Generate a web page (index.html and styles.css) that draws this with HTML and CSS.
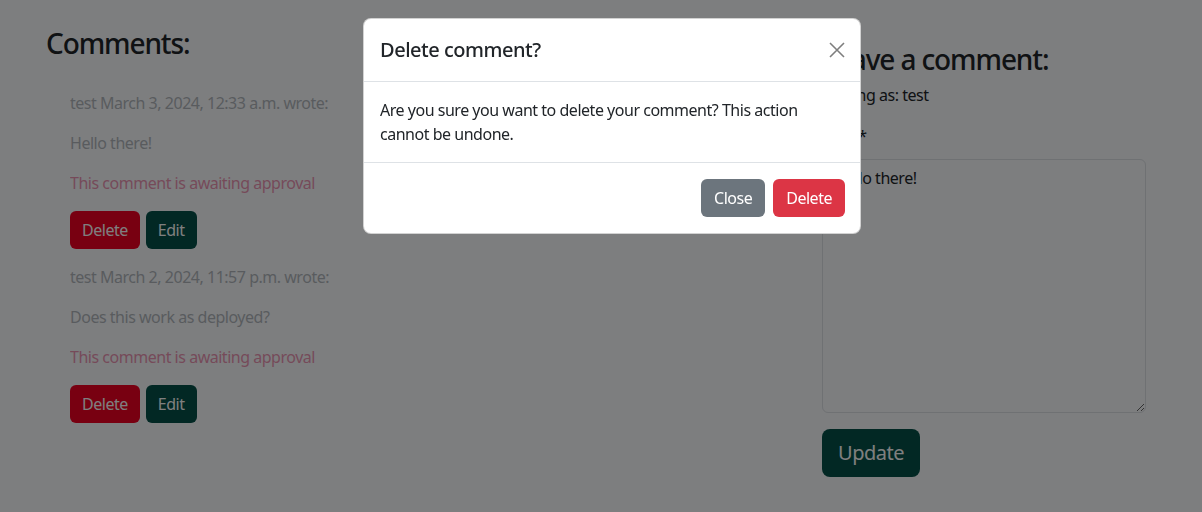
FILE: index.html
```html
<!DOCTYPE html>
<html lang="en">
<head>
<meta charset="utf-8">
<title>Comments</title>
<link rel="stylesheet" href="styles.css">
</head>
<body>
<main class="page">
  <section class="comments-col">
    <h3 class="heading">Comments:</h3>
    <div class="comment faded">
      <p class="meta">test March 3, 2024, 12:33 a.m. wrote:</p>
      <p class="body-text">Hello there!</p>
      <p class="approval">This comment is awaiting approval</p>
    </div>
    <div class="actions">
      <button class="btn btn-red">Delete</button>
      <button class="btn btn-green">Edit</button>
    </div>
    <div class="comment faded">
      <p class="meta">test March 2, 2024, 11:57 p.m. wrote:</p>
      <p class="body-text">Does this work as deployed?</p>
      <p class="approval">This comment is awaiting approval</p>
    </div>
    <div class="actions">
      <button class="btn btn-red">Delete</button>
      <button class="btn btn-green">Edit</button>
    </div>
  </section>
  <section class="form-col">
    <h3 class="heading heading-form">Leave a comment:</h3>
    <p class="posting">Posting as: test</p>
    <form class="comment-form">
      <label class="label">Body<span class="ast">*</span></label>
      <textarea class="textarea">Hello there!</textarea>
      <button type="button" class="btn btn-green btn-lg">Update</button>
    </form>
  </section>
</main>
<div class="backdrop"></div>
<div class="modal">
  <div class="modal-header">
    <h5 class="modal-title">Delete comment?</h5>
    <button class="btn-close" aria-label="Close">
      <svg width="16" height="16" viewBox="0 0 16 16"><path d="M1 1 L15 15 M15 1 L1 15" stroke="#000" stroke-width="1.6" fill="none"/></svg>
    </button>
  </div>
  <div class="modal-body">Are you sure you want to delete your comment? This action cannot be undone.</div>
  <div class="modal-footer">
    <button class="btn btn-modal btn-secondary">Close</button>
    <button class="btn btn-modal btn-danger">Delete</button>
  </div>
</div>
</body>
</html>
```
FILE: styles.css
```css
* { box-sizing: border-box; }
html, body { margin: 0; }
body {
  font-family: "Noto Sans", "Open Sans", sans-serif;
  font-size: 16px;
  line-height: 1.5;
  letter-spacing: -0.03em;
  color: #212529;
  background: #fafcff;
  width: 1202px;
  height: 512px;
  overflow: hidden;
}
.page {
  display: flex;
  padding-left: 46px;
}
.comments-col {
  width: 776px;
  padding-top: 27px;
}
.heading {
  font-size: 28px;
  font-weight: 500;
  line-height: 1.2;
  letter-spacing: -0.04em;
  margin: 0 0 30px;
}
.comment, .actions { padding-left: 24px; }
.comment p { margin: 0 0 16px; }
.faded { opacity: 0.5; }
.meta, .body-text { color: #6c757d; }
.approval { color: #e02f6a; }
.actions { display: flex; gap: 6px; margin-bottom: 16px; }
.btn {
  font-family: inherit;
  font-size: 16px;
  letter-spacing: inherit;
  line-height: 24px;
  height: 38px;
  padding: 6px 11px;
  border: 1px solid transparent;
  border-radius: 6px;
  color: #fff;
  cursor: pointer;
}
.btn-modal { padding: 6px 12px; }
.btn-red { background: #f00022; }
.btn-green { background: #045048; }
.btn-lg { font-size: 20px; line-height: 30px; height: 48px; padding: 8px 15px; border-radius: 8px; }
.form-col {
  width: 324px;
  padding-top: 43px;
}
.heading-form { margin-bottom: 6px; }
.posting { margin: 0 0 17px; }
.comment-form { display: flex; flex-direction: column; align-items: flex-start; }
.label { margin-bottom: 11px; }
.textarea {
  width: 324px;
  height: 254px;
  font-family: inherit;
  font-size: 16px;
  letter-spacing: inherit;
  line-height: 24px;
  padding: 6px 12px;
  border: 1px solid #dee2e6;
  border-radius: 6px;
  background: #fafcff;
  color: #212529;
  margin-bottom: 16px;
  resize: vertical;
}
.backdrop {
  position: fixed;
  inset: 0;
  background: rgba(0, 0, 0, 0.5);
}
.modal {
  position: absolute;
  left: 363px;
  top: 18px;
  width: 498px;
  background: #fff;
  border: 1px solid rgba(0, 0, 0, 0.175);
  border-radius: 8px;
}
.modal-header {
  display: flex;
  align-items: center;
  justify-content: space-between;
  padding: 16px;
  border-bottom: 1px solid #dee2e6;
}
.modal-title {
  margin: 0;
  font-size: 20px;
  font-weight: 500;
  line-height: 30px;
}
.btn-close {
  width: 24px;
  height: 24px;
  padding: 4px;
  border: 0;
  background: transparent;
  opacity: 0.5;
  display: flex;
  align-items: center;
  justify-content: center;
  margin-right: -5px;
}
.btn-close svg { width: 18px; height: 18px; }
.modal-body { padding: 16px; }
.modal-footer {
  display: flex;
  justify-content: flex-end;
  gap: 8px;
  padding: 16px 15px 16px 16px;
  border-top: 1px solid #dee2e6;
}
.btn-secondary { background: #6c757d; }
.btn-danger { background: #dc3545; }
```
